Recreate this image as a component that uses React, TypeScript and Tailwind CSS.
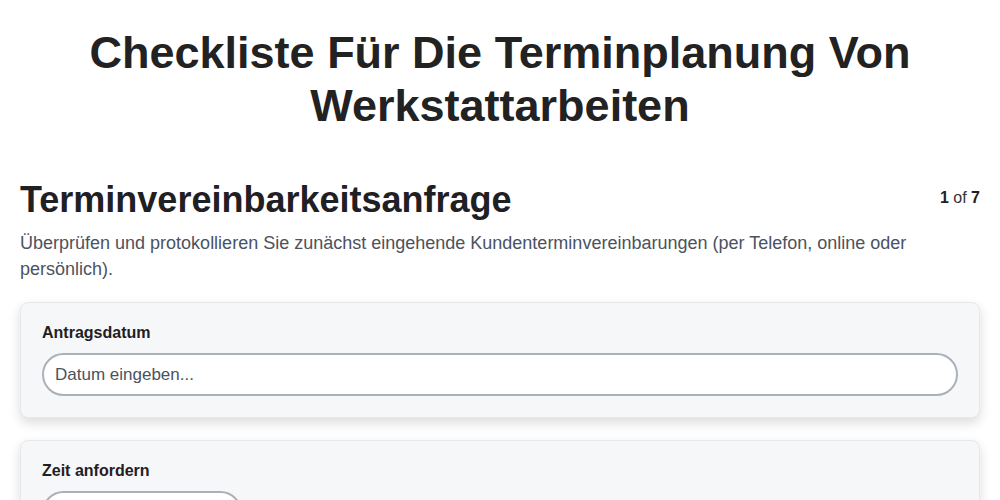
import React from "react";

const font = { fontFamily: '"Liberation Sans", Arial, sans-serif' };

function Field({ label, placeholder, narrow }: { label: string; placeholder: string; narrow?: boolean }) {
  return (
    <div className="bg-[#f6f7f9] border border-[#e6e8ec] rounded-lg shadow-[0_5px_12px_rgba(0,0,0,0.14)] px-[21px] pt-[20px] pb-[21px]">
      <label className="block text-[16px] font-bold text-[#1f2023] leading-[20px] mb-[10px]">{label}</label>
      <input
        type="text"
        placeholder={placeholder}
        className={`${narrow ? "w-[200px]" : "w-full"} h-[43px] px-[11px] bg-white border-2 border-[#abb1b9] rounded-full text-[17px] text-[#333] placeholder-[#4b5260] focus:outline-none`}
      />
    </div>
  );
}

export default function App() {
  return (
    <div className="min-h-screen bg-white text-[#222]" style={font}>
      <h1 className="text-center text-[45px] font-bold leading-[53px] pt-[26px] px-[60px]">
        Checkliste Für Die Terminplanung Von Werkstattarbeiten
      </h1>

      <div className="px-[20px] pt-[46px]">
        <div className="flex items-start justify-between">
          <h2 className="text-[36px] font-bold leading-[44px] text-[#1f2023]">Terminvereinbarkeitsanfrage</h2>
          <div className="text-[16px] leading-[20px] mt-[10px] text-[#333]">
            <span className="font-bold text-[#1f2023]">1</span> of <span className="font-bold text-[#1f2023]">7</span>
          </div>
        </div>
        <p className="text-[18px] leading-[26px] text-[#4b5260] mt-[8px]">
          Überprüfen und protokollieren Sie zunächst eingehende Kundenterminvereinbarungen (per Telefon, online oder persönlich).
        </p>

        <div className="flex flex-col gap-[22px] mt-[20px]">
          <Field label="Antragsdatum" placeholder="Datum eingeben..." />
          <Field label="Zeit anfordern" placeholder="" narrow />
        </div>
      </div>
    </div>
  );
}
